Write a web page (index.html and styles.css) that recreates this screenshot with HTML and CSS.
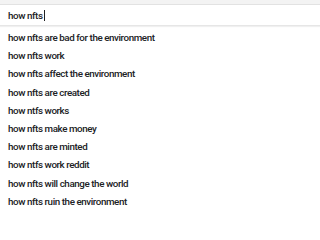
FILE: index.html
```html
<!DOCTYPE html>
<html>
<head>
<meta charset="utf-8">
<link rel="stylesheet" href="styles.css">
</head>
<body>
<div class="top"></div>
<div class="search"><span class="query">how nfts</span><span class="caret"></span></div>
<ul class="list">
<li>how nfts are bad for the environment</li>
<li>how nfts work</li>
<li>how nfts affect the environment</li>
<li>how nfts are created</li>
<li>how ntfs works</li>
<li>how nfts make money</li>
<li>how nfts are minted</li>
<li>how ntfs work reddit</li>
<li>how nfts will change the world</li>
<li>how nfts ruin the environment</li>
</ul>
</body>
</html>
```
FILE: styles.css
```css
html, body { margin: 0; padding: 0; background: #fff; }
body { width: 320px; height: 214px; overflow: hidden; font-family: Roboto, "Liberation Sans", sans-serif; color: #202124; }
.top { height: 4px; background: #f3f3f3; border-bottom: 1px solid #e2e2e2; }
.search { height: 20px; display: flex; align-items: center; padding-left: 8px; border-bottom: 1px solid #e6e6e6; box-shadow: 0 1px 1px #f0f0f0; font-size: 9.8px; font-weight: 500; letter-spacing: -0.42px; }
.caret { width: 1px; height: 11px; background: #202124; margin-left: 1px; }
.list { list-style: none; margin: 0; padding: 3px 0 0 0; }
.list li { height: 18.2px; line-height: 18.2px; padding-left: 8px; font-size: 9.8px; font-weight: 500; letter-spacing: -0.42px; white-space: nowrap; }
```
